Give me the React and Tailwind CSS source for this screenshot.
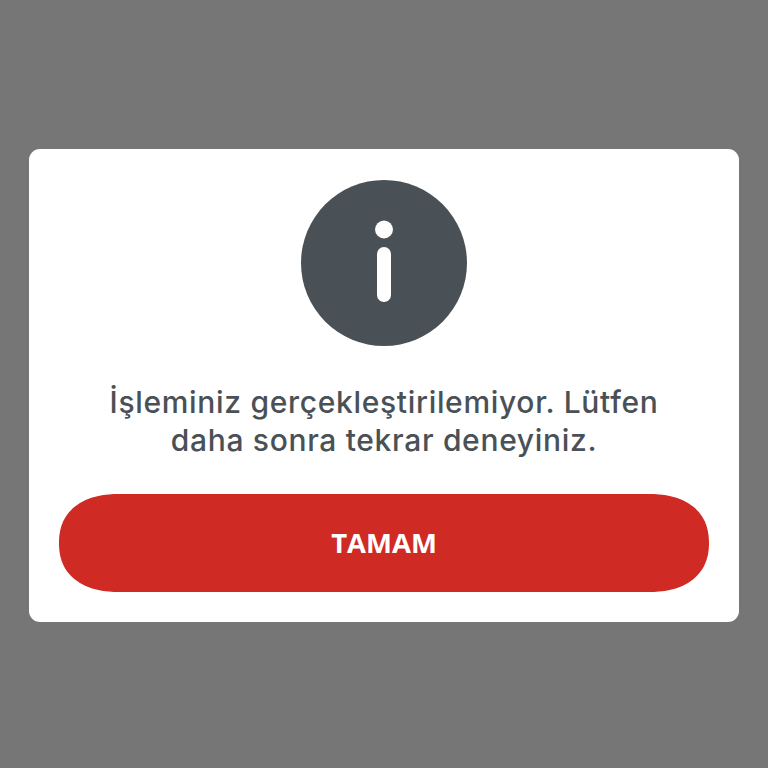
export default function App() {
  return (
    <div className="h-[768px] w-[768px] bg-[#767676] pt-[149px] pl-[29px] font-['Inter',sans-serif]">
      <div className="w-[710px] h-[473px] bg-white rounded-[11px] pt-[31px] px-[30px] flex flex-col items-center">
        {/* info icon */}
        <svg width="166" height="166" viewBox="0 0 166 166" className="shrink-0">
          <circle cx="83" cy="83" r="83" fill="#4a5156" />
          <circle cx="83" cy="49.5" r="9" fill="#fff" />
          <rect x="76" y="67" width="14" height="55" rx="7" fill="#fff" />
        </svg>

        <p className="mt-[37px] text-center text-[30px] leading-[38px] tracking-[0.68px] font-[540] text-[#4a5156] whitespace-nowrap">
          İşleminiz gerçekleştirilemiyor. Lütfen
          <br />
          daha sonra tekrar deneyiniz.
        </p>

        <button className="mt-[35px] w-[650px] h-[98px] shrink-0 rounded-[60px/49px] [corner-shape:superellipse(1.2)] bg-[#cf2a23] text-white text-[27.5px] font-bold font-['Open_Sans',sans-serif]">
          TAMAM
        </button>
      </div>
    </div>
  );
}
